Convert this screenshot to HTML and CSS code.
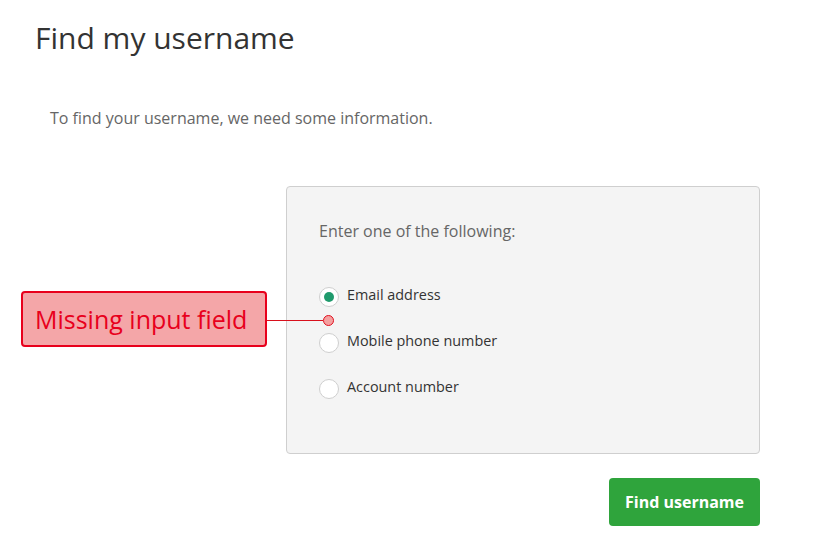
FILE: index.html
```html
<!DOCTYPE html>
<html>
<head>
<meta charset="utf-8">
<link rel="stylesheet" href="styles.css">
</head>
<body>
<div class="page">
  <h1 class="title">Find my username</h1>
  <p class="intro">To find your username, we need some information.</p>
  <div class="panel">
    <p class="panel-lead">Enter one of the following:</p>
    <div class="options">
      <label class="option"><span class="radio checked"></span><span class="option-text">Email address</span></label>
      <label class="option"><span class="radio"></span><span class="option-text">Mobile phone number</span></label>
      <label class="option"><span class="radio"></span><span class="option-text">Account number</span></label>
    </div>
  </div>
  <div class="actions">
    <button class="btn-primary">Find username</button>
  </div>
  <div class="callout">Missing input field</div>
  <div class="callout-line"></div>
  <div class="callout-dot"></div>
</div>
</body>
</html>
```
FILE: styles.css
```css
html, body {
  margin: 0;
  padding: 0;
  background: #fff;
}
body {
  font-family: "Open Sans", "Liberation Sans", sans-serif;
  color: #333;
}
.page {
  position: relative;
  width: 760px;
  padding-top: 19px;
}
.title {
  margin: 0 0 0 35px;
  font-size: 30px;
  line-height: 38px;
  font-weight: 400;
  color: #333;
}
.intro {
  margin: 51px 0 0 50px;
  font-size: 16px;
  line-height: 20px;
  color: #666;
}
.panel {
  margin: 58px 0 0 286px;
  box-sizing: border-box;
  width: 474px;
  height: 268px;
  border: 1px solid #cfcfcf;
  border-radius: 4px;
  background: #f4f4f4;
  padding: 34px 32px 0 32px;
}
.panel-lead {
  margin: 0;
  font-size: 16px;
  line-height: 20px;
  color: #666;
}
.options {
  margin-top: 46px;
  display: flex;
  flex-direction: column;
  gap: 26px;
}
.option {
  display: flex;
  align-items: center;
  height: 20px;
}
.radio {
  box-sizing: border-box;
  width: 20px;
  height: 20px;
  border-radius: 50%;
  border: 1px solid #cfcfcf;
  background: #fff;
  margin-right: 8px;
  display: flex;
  align-items: center;
  justify-content: center;
  flex: none;
}
.radio.checked::after {
  content: "";
  width: 10px;
  height: 10px;
  border-radius: 50%;
  background: #1f9a6c;
}
.option-text {
  font-size: 14.4px;
  line-height: 20px;
  color: #333;
  position: relative;
  top: -2px;
}
.actions {
  margin-top: 24px;
  display: flex;
  justify-content: flex-end;
}
.btn-primary {
  width: 151px;
  height: 48px;
  border: none;
  border-radius: 4px;
  background: #2fa43c;
  color: #fff;
  font-family: "Open Sans", "Liberation Sans", sans-serif;
  font-weight: 700;
  font-size: 16px;
  padding: 0;
}
.callout {
  position: absolute;
  left: 21px;
  top: 291px;
  box-sizing: border-box;
  width: 246px;
  height: 56px;
  border: 2px solid #e8001c;
  border-radius: 4px;
  background: #f4a6a8;
  color: #e8001c;
  font-size: 25px;
  line-height: 52px;
  padding-left: 12px;
  white-space: nowrap;
}
.callout-line {
  position: absolute;
  left: 267px;
  top: 320px;
  width: 56px;
  height: 1px;
  background: #d8101c;
}
.callout-dot {
  position: absolute;
  left: 323px;
  top: 315px;
  box-sizing: border-box;
  width: 11px;
  height: 11px;
  border-radius: 50%;
  border: 1px solid #e01020;
  background: #f4a0a0;
}
```
